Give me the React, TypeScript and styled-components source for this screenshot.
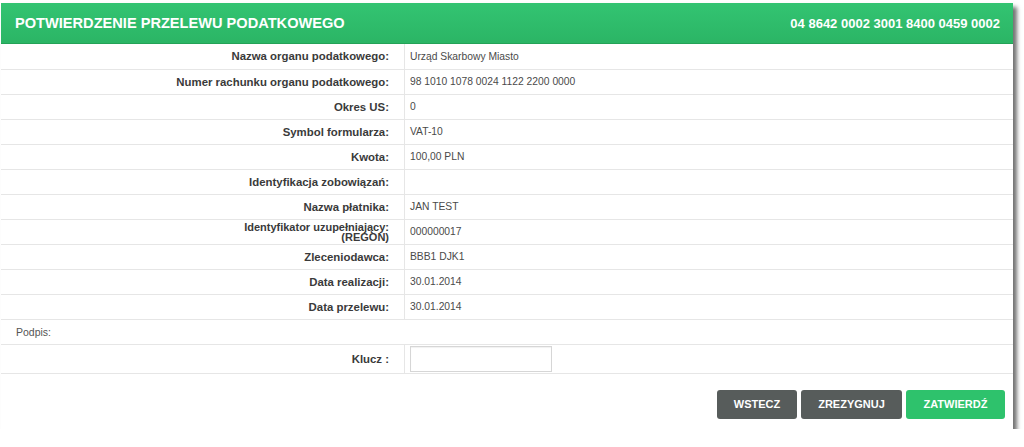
import styled, { createGlobalStyle } from 'styled-components'

const GlobalStyle = createGlobalStyle`
	html, body {
		margin: 0;
		padding: 0;
		background: #fff;
	}
	body {
		font-family: 'Liberation Sans', Arial, sans-serif;
	}
`

type Detail = { label: string; value: string; tall?: boolean }

const details: Detail[] = [
	{ label: 'Nazwa organu podatkowego:', value: 'Urząd Skarbowy Miasto' },
	{ label: 'Numer rachunku organu podatkowego:', value: '98 1010 1078 0024 1122 2200 0000' },
	{ label: 'Okres US:', value: '0' },
	{ label: 'Symbol formularza:', value: 'VAT-10' },
	{ label: 'Kwota:', value: '100,00 PLN' },
	{ label: 'Identyfikacja zobowiązań:', value: '' },
	{ label: 'Nazwa płatnika:', value: 'JAN TEST' },
	{ label: 'Identyfikator uzupełniający: (REGON)', value: '000000017', tall: true },
	{ label: 'Zleceniodawca:', value: 'BBB1 DJK1' },
	{ label: 'Data realizacji:', value: '30.01.2014' },
	{ label: 'Data przelewu:', value: '30.01.2014' },
]

function App() {
	return (
		<>
			<GlobalStyle />
			<Panel>
				<Header>
					<Title>Potwierdzenie przelewu podatkowego</Title>
					<Account>04 8642 0002 3001 8400 0459 0002</Account>
				</Header>
				<Details>
					<tbody>
						{details.map((d) => (
							<Row key={d.label}>
								<LabelCell>
									{d.tall ? (
										<TwoLine>
											Identyfikator uzupełniający:
											<br />
											(REGON)
										</TwoLine>
									) : (
										d.label
									)}
								</LabelCell>
								<ValueCell>{d.value}</ValueCell>
							</Row>
						))}
						<Row>
							<SignatureCell colSpan={2}>Podpis:</SignatureCell>
						</Row>
						<KeyRow>
							<LabelCell>Klucz :</LabelCell>
							<ValueCell>
								<KeyInput type="password" />
							</ValueCell>
						</KeyRow>
					</tbody>
				</Details>
				<Footer>
					<Button $variant="dark" $width={80}>Wstecz</Button>
					<Button $variant="dark" $width={101}>Zrezygnuj</Button>
					<Button $variant="green" $width={99}>Zatwierdź</Button>
				</Footer>
			</Panel>
		</>
	)
}

export default App

const Panel = styled.div`
	margin: 3px 0 0 1px;
	width: 1012px;
	height: 426px;
	background: #fff;
	box-shadow: 4px 4px 4px rgba(0, 0, 0, 0.55);
	display: flex;
	flex-direction: column;
`

const Header = styled.header`
	height: 40px;
	display: flex;
	align-items: center;
	justify-content: space-between;
	padding: 0 13px 0 14px;
	background: linear-gradient(#33c472, #2bb565);
	border-bottom: 1px solid #24a257;
	color: #fff;
`

const Title = styled.h1`
	margin: 0;
	font-size: 14.6px;
	font-weight: 700;
	text-transform: uppercase;
`

const Account = styled.span`
	font-size: 13px;
	font-weight: 700;
`

const Details = styled.table`
	width: 100%;
	border-collapse: collapse;
`

const Row = styled.tr`
	height: 25px;
	border-bottom: 1px solid #e6e6e6;
`

const KeyRow = styled(Row)`
	height: 29px;
`

const LabelCell = styled.td`
	width: 388px;
	padding: 0 15px 0 0;
	text-align: right;
	font-size: 11.4px;
	font-weight: 700;
	color: #3a3a3a;
	border-right: 1px solid #e6e6e6;
	vertical-align: middle;
`

const TwoLine = styled.span`
	display: inline-block;
	font-size: 11px;
	line-height: 10px;
	padding-top: 1px;
`

const ValueCell = styled.td`
	padding: 0 0 0 5px;
	font-size: 10.3px;
	color: #4a4a4a;
	vertical-align: middle;
`

const SignatureCell = styled.td`
	padding-left: 15px;
	font-size: 10.5px;
	color: #555;
`

const KeyInput = styled.input`
	display: block;
	box-sizing: border-box;
	width: 142px;
	height: 26px;
	margin: 0;
	border: 1px solid #d6d6d6;
	box-shadow: inset 0 1px 1px rgba(0, 0, 0, 0.06);
	background: #fff;
`

const Footer = styled.div`
	display: flex;
	justify-content: flex-end;
	gap: 4px;
	padding: 16px 8px 0 0;
`

const Button = styled.button<{ $variant: 'dark' | 'green'; $width: number }>`
	width: ${(p) => p.$width}px;
	height: 29px;
	border: none;
	border-radius: 3px;
	padding: 0;
	font-family: 'Liberation Sans', Arial, sans-serif;
	font-size: 11px;
	font-weight: 700;
	text-transform: uppercase;
	color: #fff;
	background: ${(p) => (p.$variant === 'green' ? '#2ec26c' : '#575c5b')};
	cursor: pointer;
`
